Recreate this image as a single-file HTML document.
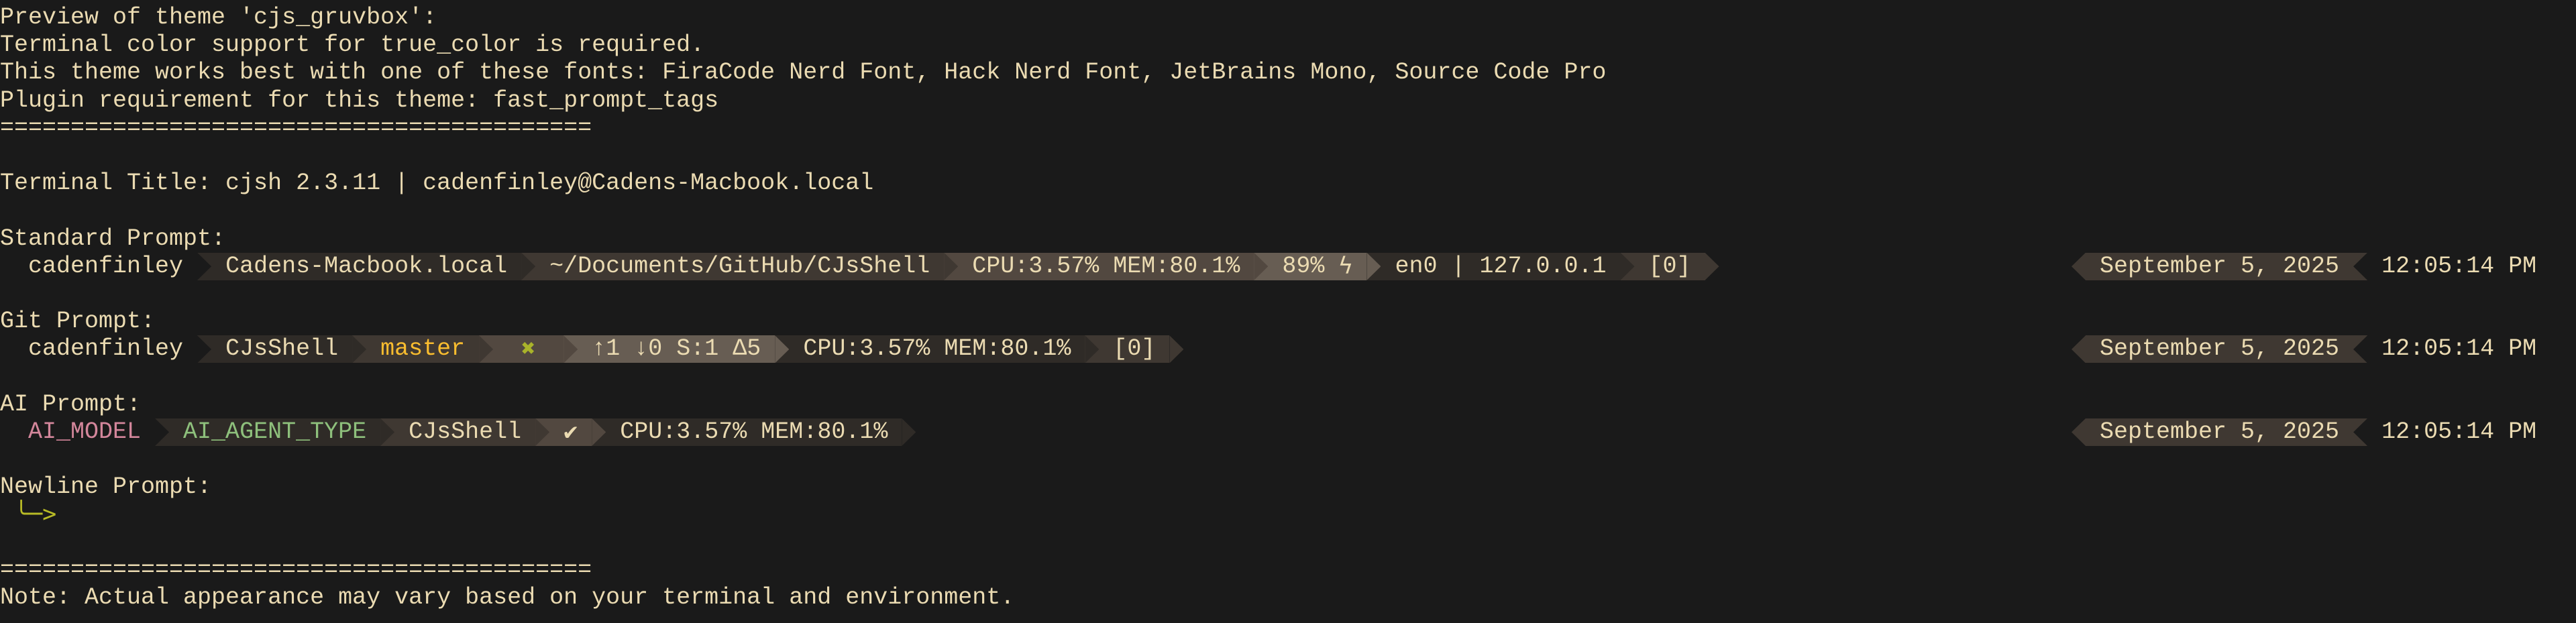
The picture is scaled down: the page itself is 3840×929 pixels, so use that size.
<!DOCTYPE html>
<html><head><meta charset="utf-8"><style>
html,body{margin:0;padding:0;background:#1a1a1a;}
body{width:3840px;height:929px;overflow:hidden;position:relative;font-family:"Liberation Mono","DejaVu Sans Mono",monospace;font-size:35px;color:#ebdbb2;}
.wrap{position:absolute;left:0;top:6px;}
.r{height:41.2px;line-height:41.2px;white-space:pre;position:relative;}
.r span{display:inline-block;height:41.2px;vertical-align:top;white-space:pre;}
.s{width:21px;}
.s::before{content:"";display:block;width:100%;height:100%;background:currentColor;clip-path:polygon(0 0,100% 50%,0 100%);}
.l::before{clip-path:polygon(100% 0,0 50%,100% 100%);}
.rt{position:absolute;left:3088px;top:0;}
.sym{font-family:"DejaVu Sans Mono","DejaVu Sans",monospace;}
</style></head><body><div class="wrap">
<div class="r">Preview of theme 'cjs_gruvbox':</div>
<div class="r">Terminal color support for true_color is required.</div>
<div class="r">This theme works best with one of these fonts: FiraCode Nerd Font, Hack Nerd Font, JetBrains Mono, Source Code Pro</div>
<div class="r">Plugin requirement for this theme: fast_prompt_tags</div>
<div class="r">==========================================</div>
<div class="r"> </div>
<div class="r">Terminal Title: cjsh 2.3.11 | cadenfinley@Cadens-Macbook.local</div>
<div class="r"> </div>
<div class="r">Standard Prompt:</div>
<div class="r"><span>  cadenfinley </span><span class="s" style="background:#2f2b27;color:#1a1a1a"></span><span style="background:#2f2b27"> Cadens-Macbook.local </span><span class="s" style="background:#3f3832;color:#2f2b27"></span><span style="background:#3f3832"> ~/Documents/GitHub/CJsShell </span><span class="s" style="background:#524840;color:#3f3832"></span><span style="background:#524840"> CPU:3.57% MEM:80.1% </span><span class="s" style="background:#675d53;color:#524840"></span><span style="background:#675d53"> 89% <span class="sym">ϟ</span> </span><span class="s" style="background:#2f2b27;color:#675d53"></span><span style="background:#2f2b27"> en0 | 127.0.0.1 </span><span class="s" style="background:#3f3832;color:#2f2b27"></span><span style="background:#3f3832"> [0] </span><span class="s" style="background:#1a1a1a;color:#3f3832"></span>
<div class="rt"><span class="s l" style="background:#1a1a1a;color:#3f3832"></span><span style="background:#3f3832"> September 5, 2025 </span><span class="s l" style="background:#3f3832;color:#1a1a1a"></span><span> 12:05:14 PM</span></div></div>
<div class="r"> </div>
<div class="r">Git Prompt:</div>
<div class="r"><span>  cadenfinley </span><span class="s" style="background:#2f2b27;color:#1a1a1a"></span><span style="background:#2f2b27"> CJsShell </span><span class="s" style="background:#3f3832;color:#2f2b27"></span><span style="background:#3f3832;color:#fabd2f"> master </span><span class="s" style="background:#524840;color:#3f3832"></span><span style="background:#524840;color:#a9b32a">  <span class="sym">✖</span>  </span><span class="s" style="background:#675d53;color:#524840"></span><span style="background:#675d53"> ↑1 ↓0 S:1 Δ5 </span><span class="s" style="background:#2f2b27;color:#675d53"></span><span style="background:#2f2b27"> CPU:3.57% MEM:80.1% </span><span class="s" style="background:#3f3832;color:#2f2b27"></span><span style="background:#3f3832"> [0] </span><span class="s" style="background:#1a1a1a;color:#3f3832"></span>
<div class="rt"><span class="s l" style="background:#1a1a1a;color:#3f3832"></span><span style="background:#3f3832"> September 5, 2025 </span><span class="s l" style="background:#3f3832;color:#1a1a1a"></span><span> 12:05:14 PM</span></div></div>
<div class="r"> </div>
<div class="r">AI Prompt:</div>
<div class="r"><span style="color:#d3869b">  AI_MODEL </span><span class="s" style="background:#2f2b27;color:#1a1a1a"></span><span style="background:#2f2b27;color:#8ec07c"> AI_AGENT_TYPE </span><span class="s" style="background:#3f3832;color:#2f2b27"></span><span style="background:#3f3832"> CJsShell </span><span class="s" style="background:#524840;color:#3f3832"></span><span style="background:#524840"> <span class="sym">✔</span> </span><span class="s" style="background:#2f2b27;color:#524840"></span><span style="background:#2f2b27"> CPU:3.57% MEM:80.1% </span><span class="s" style="background:#1a1a1a;color:#2f2b27"></span>
<div class="rt"><span class="s l" style="background:#1a1a1a;color:#3f3832"></span><span style="background:#3f3832"> September 5, 2025 </span><span class="s l" style="background:#3f3832;color:#1a1a1a"></span><span> 12:05:14 PM</span></div></div>
<div class="r"> </div>
<div class="r">Newline Prompt:</div>
<div class="r" style="color:#b8bb26"> <span class="sym">╰─&gt;</span></div>
<div class="r"> </div>
<div class="r">==========================================</div>
<div class="r">Note: Actual appearance may vary based on your terminal and environment.</div>
</div></body></html>
